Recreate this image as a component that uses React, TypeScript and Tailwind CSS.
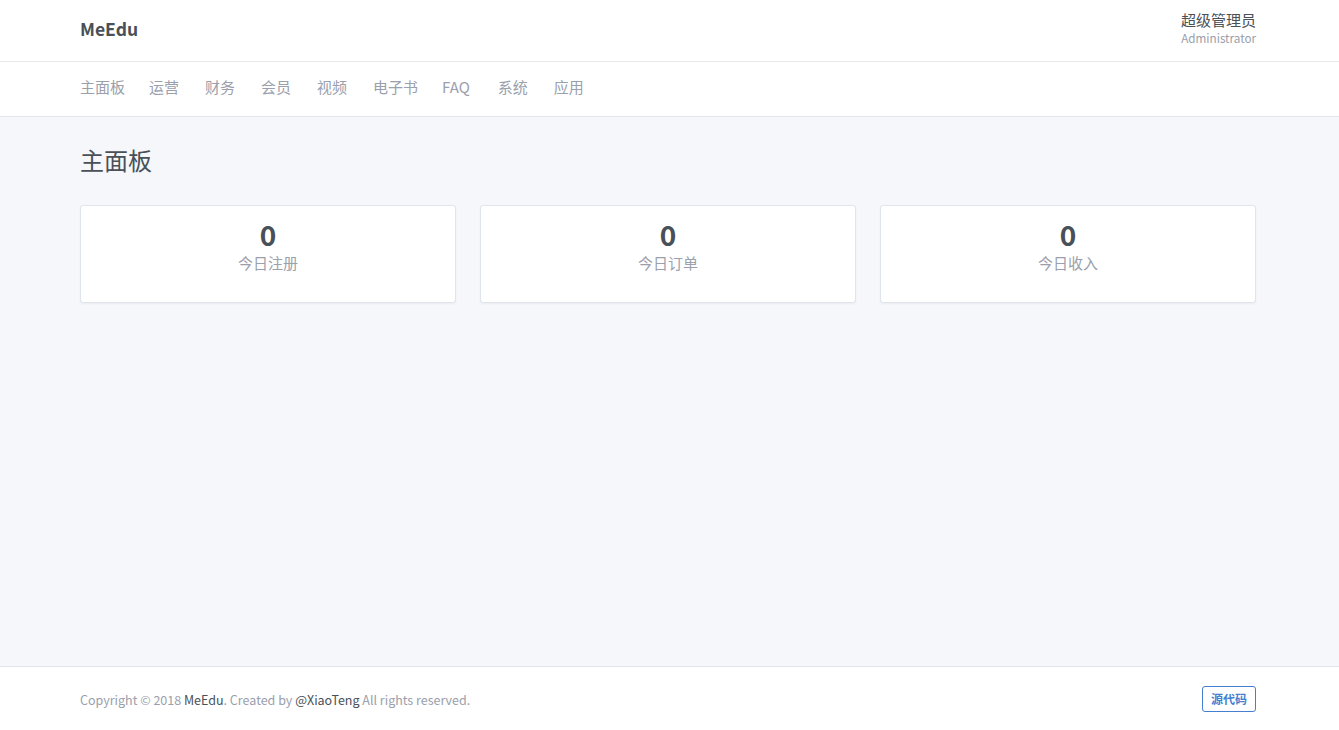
import React from "react";

const font = { fontFamily: '"Noto Sans CJK SC", "Noto Sans", sans-serif' };

export default function App() {
  const nav = [
    { t: "主面板", c: "mr-[-2px]" },
    { t: "运营", c: "" },
    { t: "财务", c: "" },
    { t: "会员", c: "" },
    { t: "视频", c: "" },
    { t: "电子书", c: "mr-[-2px]" },
    { t: "FAQ", c: "mr-[2px]" },
    { t: "系统", c: "" },
    { t: "应用", c: "" },
  ];
  const cards = [
    { n: "0", l: "今日注册" },
    { n: "0", l: "今日订单" },
    { n: "0", l: "今日收入" },
  ];
  return (
    <div style={font} className="flex flex-col h-[730px] bg-[#f5f7fb] text-[#495057]">
      <header className="bg-white border-b border-[#e6e8ec] h-[62px] shrink-0">
        <div className="ml-[80px] w-[1176px] h-full flex items-center justify-between">
          <div className="text-[17.5px] font-semibold text-[#495057] leading-none pb-[4px]">MeEdu</div>
          <div className="flex flex-col items-end pb-[6px]">
            <div className="text-[15px] leading-[20px] text-[#495057]">超级管理员</div>
            <div className="text-[11.7px] leading-[15px] text-[#9aa0ac]">Administrator</div>
          </div>
        </div>
      </header>
      <nav className="bg-white border-b border-[#e0e5ec] h-[55px] shrink-0">
        <div className="ml-[80px] w-[1176px] h-full flex items-center gap-[26px] pb-[6px]">
          {nav.map((n) => (
            <span key={n.t} className={"text-[15px] text-[#9aa0ac] leading-none " + n.c}>
              {n.t}
            </span>
          ))}
        </div>
      </nav>
      <main className="flex-1">
        <div className="ml-[80px] w-[1176px]">
          <h1 className="text-[24px] leading-[30px] font-normal text-[#495057] mt-[28px] mb-[30px]">主面板</h1>
          <div className="grid grid-cols-3 gap-[24px]">
            {cards.map((c, i) => (
              <div
                key={i}
                className="bg-white border border-[#e0e5ec] rounded-[3px] shadow-[0_1px_2px_rgba(0,0,0,0.05)] h-[98px] flex flex-col items-center pt-[11px]"
              >
                <div className="text-[28px] font-bold leading-[34px] text-[#495057]">{c.n}</div>
                <div className="text-[15px] leading-[20px] text-[#9aa0ac] mt-[2px]">{c.l}</div>
              </div>
            ))}
          </div>
        </div>
      </main>
      <footer className="bg-white border-t border-[#e0e5ec] h-[64px] shrink-0">
        <div className="ml-[80px] w-[1176px] h-full flex items-center justify-between">
          <div className="text-[12.5px] text-[#9aa0ac] pt-[4px]">
            Copyright © 2018 <span className="text-[#495057]">MeEdu</span>. Created by{" "}
            <span className="text-[#495057]">@XiaoTeng</span> All rights reserved.
          </div>
          <div className="border border-[#467fcf] text-[#467fcf] rounded-[3px] text-[12px] font-bold h-[26px] px-[8px] flex items-center">
            源代码
          </div>
        </div>
      </footer>
    </div>
  );
}
